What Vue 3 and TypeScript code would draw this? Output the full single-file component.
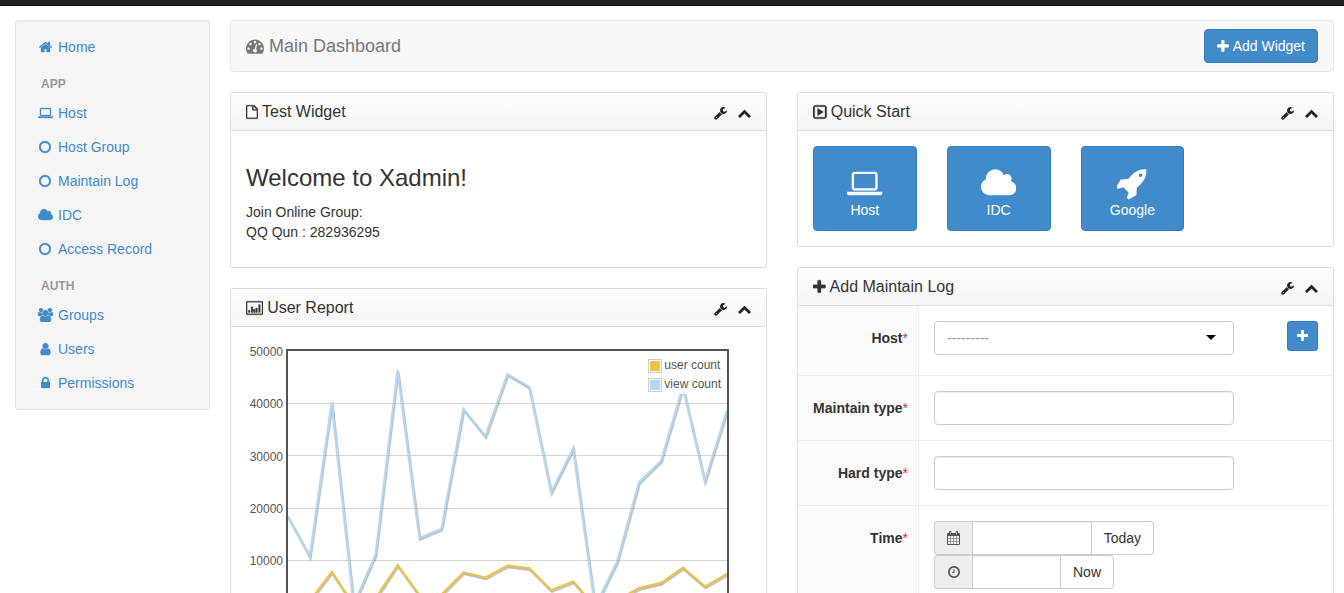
<script setup lang="ts">
import { ref } from 'vue'

interface Icon { box: string; d: string }

const icons: Record<string, Icon> = {
  home: { box: '64 0 1664 1792', d: 'M1472 992v480q0 26-19 45t-45 19h-384v-384h-256v384h-384q-26 0-45-19t-19-45v-480q0-1 .5-3t.5-3l575-474 575 474q1 2 1 6zm223-69l-62 74q-8 9-21 11h-3q-13 0-21-7l-692-577-692 577q-12 8-24 7-13-2-21-11l-62-74q-8-10-7-23.5t11-21.5l719-599q32-26 76-26t76 26l244 204v-195q0-14 9-23t23-9h192q14 0 23 9t9 23v408l219 182q10 8 11 21.5t-7 23.5z' },
  laptop: { box: '0 0 1920 1792', d: 'M416 1280q-66 0-113-47t-47-113v-704q0-66 47-113t113-47h1088q66 0 113 47t47 113v704q0 66-47 113t-113 47zM384 416v704q0 13 9.500 22.500t22.500 9.500h1088q13 0 22.500-9.500t9.500-22.500v-704q0-13-9.500-22.500t-22.500-9.500h-1088q-13 0-22.500 9.500t-9.500 22.500zM1760 1344h160v96q0 40-47 68t-113 28h-1600q-66 0-113-28t-47-68v-96h160z' },
  circle: { box: '128 0 1536 1792', d: 'M896 352q-148 0-273 73t-198 198-73 273 73 273 198 198 273 73 273-73 198-198 73-273-73-273-198-198-273-73zm768 544q0 209-103 385.5t-279.5 279.5-385.5 103-385.5-103-279.5-279.5-103-385.5 103-385.5 279.5-279.5 385.5-103 385.5 103 279.5 279.5 103 385.5z' },
  cloud: { box: '64 0 1920 1792', d: 'M1984 1152q0 159-112.5 271.5t-271.5 112.5h-1088q-185 0-316.5-131.5t-131.5-316.5q0-132 71-241.5t187-163.5q-2-28-2-43 0-212 150-362t362-150q158 0 286.5 88t187.5 230q70-62 166-62 106 0 181 75t75 181q0 75-41 138 129 30 213 134.5t84 239.5z' },
  users: { box: '64 0 1920 1792', d: 'M657 896q-162 5-265 128h-134q-82 0-138-40.5t-56-118.5q0-353 124-353 6 0 43.5 21t97.5 42.5 119 21.5q67 0 133-23-5 37-5 66 0 159 93 256zm1071 637q0 120-73 189.5t-194 69.5h-874q-121 0-194-69.5t-73-189.5q0-53 3.5-103.5t14-109 26.5-108.5 43-97.5 62-81 85.500-53.5 111.5-20q10 0 43 21.5t73 48 107 48 135 21.5 135-21.5 107-48 73-48 43-21.5q61 0 111.5 20t85.5 53.5 62 81 43 97.5 26.5 108.5 14 109 3.5 103.5zm-1024-1277q0 106-75 181t-181 75-181-75-75-181 75-181 181-75 181 75 75 181zm704 384q0 159-112.5 271.5t-271.5 112.5-271.5-112.5-112.5-271.5 112.5-271.5 271.5-112.5 271.5 112.5 112.5 271.5zm576 225q0 78-56 118.5t-138 40.5h-134q-103-123-265-128 93-97 93-256 0-29-5-66 66 23 133 23 59 0 119-21.5t97.5-42.5 43.5-21q124 0 124 353zm-128-609q0 106-75 181t-181 75-181-75-75-181 75-181 181-75 181 75 75 181z' },
  user: { box: '192 0 1408 1792', d: 'M1536 1399q0 109-62.5 187t-150.5 78h-854q-88 0-150.5-78t-62.5-187q0-85 8.5-160.5t31.5-152 58.5-131 94-89 134.5-34.5q131 128 313 128t313-128q76 0 134.5 34.5t94 89 58.5 131 31.5 152 8.5 160.5zm-256-887q0 159-112.5 271.5t-271.5 112.5-271.5-112.5-112.5-271.5 112.5-271.5 271.5-112.5 271.5 112.5 112.5 271.5z' },
  lock: { box: '320 0 1152 1792', d: 'M640 768h512v-192q0-106-75-181t-181-75-181 75-75 181v192zm832 96v576q0 40-28 68t-68 28h-960q-40 0-68-28t-28-68v-576q0-40 28-68t68-28h32v-192q0-184 132-316t316-132 316 132 132 316v192h32q40 0 68 28t28 68z' },
  dashboard: { box: '0 0 1792 1792', d: 'M384 1152q0-53-37.5-90.5t-90.5-37.5-90.5 37.5-37.5 90.5 37.5 90.5 90.5 37.5 90.5-37.5 37.5-90.5zm192-448q0-53-37.5-90.5t-90.5-37.5-90.5 37.5-37.5 90.5 37.5 90.5 90.5 37.5 90.5-37.5 37.5-90.5zm428 481l101-382q6-26-7.5-48.5t-38.5-29.5-48 6.5-30 39.5l-101 382q-60 5-107 43.5t-63 98.5q-20 77 20 146t117 89 146-20 89-117q16-60-6-117t-72-91zm660-33q0-53-37.5-90.5t-90.5-37.5-90.5 37.5-37.5 90.5 37.5 90.5 90.5 37.5 90.5-37.5 37.5-90.5zm-640-640q0-53-37.5-90.5t-90.5-37.5-90.5 37.5-37.5 90.5 37.5 90.5 90.5 37.5 90.5-37.5 37.5-90.5zm448 192q0-53-37.5-90.5t-90.5-37.5-90.5 37.5-37.5 90.5 37.5 90.5 90.5 37.5 90.5-37.5 37.5-90.5zm320 448q0 261-141 483-19 29-54 29h-1402q-35 0-54-29-141-221-141-483 0-182 71-348t191-286 286-191 348-71 348 71 286 191 191 286 71 348z' },
  plus: { box: '192 0 1408 1792', d: 'M1600 736v192q0 40-28 68t-68 28h-416v416q0 40-28 68t-68 28h-192q-40 0-68-28t-28-68v-416h-416q-40 0-68-28t-28-68v-192q0-40 28-68t68-28h416v-416q0-40 28-68t68-28h192q40 0 68 28t28 68v416h416q40 0 68 28t28 68z' },
  wrench: { box: '64 0 1664 1792', d: 'M448 1472q0-26-19-45t-45-19-45 19-19 45 19 45 45 19 45-19 19-45zm644-420l-682 682q-37 37-90 37-52 0-91-37l-106-108q-38-36-38-90 0-53 38-91l681-681q39 98 114.5 173.5t173.5 114.5zm634-435q0 39-23 106-47 134-164.5 217.5t-258.5 83.5q-185 0-316.5-131.5t-131.5-316.5 131.5-316.5 316.5-131.5q58 0 121.5 16.5t107.5 46.5q16 11 16 28t-16 28l-293 169v224l193 107q5-3 79-48.5t135.5-81 70.5-35.5q15 0 23.5 10t8.5 25z' },
  up: { box: '64 0 1664 1792', d: 'M1683 1331l-166 165q-19 19-45 19t-45-19l-531-531-531 531q-19 19-45 19t-45-19l-166-165q-19-19-19-45.5t19-45.5l742-741q19-19 45-19t45 19l742 741q19 19 19 45.5t-19 45.5z' },
  file: { box: '0 0 1344 1792', d: 'M96 128h752q40 0 88 20t76 48l256 256q28 28 48 76t20 88v952q0 40-28 68t-68 28H96q-40 0-68-28t-28-68V224q0-40 28-68t68-28zM128 256v1280h1088V736H800q-40 0-68-28t-28-68V256zM832 260v348h348q-8-24-20-36L868 280q-12-12-36-20z' },
  play: { box: '0 0 1536 1792', d: 'M288 128h960q119 0 203.500 84.500T1536 416v960q0 119-84.500 203.500T1248 1664H288q-119 0-203.500-84.500T0 1376V416q0-119 84.500-203.500T288 128zM256 320q-26 0-45 19t-19 45v1024q0 26 19 45t45 19h1024q26 0 45-19t19-45V384q0-26-19-45t-45-19zM512 528q0-50 50-28l576 356q36 40 0 80l-576 356q-50 22-50-28z' },
  chart: { box: '0 0 1920 1792', d: 'M128 128h1664q128 0 128 128v1280q0 128-128 128H128Q0 1664 0 1536V256Q0 128 128 128zM128 256v1280h1664V256zM256 1152h192v256H256zM576 768h192v640H576zM832 1024h192v384H832zM1088 896h192v512h-192zM1408 512h192v896h-192z' },
  rocket: { box: '64 0 1664 1792', d: 'M1440 448q0-40-28-68t-68-28-68 28-28 68 28 68 68 28 68-28 28-68zm224-288q0 249-75.5 430.5t-253.5 360.5q-81 80-195 176l-20 379q-2 16-16 26l-384 224q-7 4-16 4-12 0-23-9l-64-64q-13-14-8-32l85-276-281-281-276 85q-3 1-9 1-14 0-23-9l-64-64q-17-19-5-39l224-384q10-14 26-16l379-20q96-114 176-195 188-187 358-258t431-71q14 0 24 9.500t10 22.500z' },
  calendar: { box: '0 0 1664 1792', d: 'M128 256h128v-96q0-160 160-160t160 160v96h512v-96q0-160 160-160t160 160v96h128q128 0 128 128v1280q0 128-128 128H128Q0 1792 0 1664V384Q0 256 128 256zM128 640v288h288V640zM480 640v288h320V640zM864 640v288h320V640zM1248 640v288h288V640zM128 992v320h288V992zM480 992v320h320V992zM864 992v320h320V992zM1248 992v320h288V992zM128 1376v288h288v-288zM480 1376v288h320v-288zM864 1376v288h320v-288zM1248 1376v288h288v-288zM384 128v320h64V128zM1216 128v320h64V128z' },
  clock: { box: '128 0 1536 1792', d: 'M896 352q-148 0-273 73t-198 198-73 273 73 273 198 198 273 73 273-73 198-198 73-273-73-273-198-198-273-73zm768 544q0 209-103 385.5t-279.5 279.5-385.5 103-385.5-103-279.5-279.5-103-385.5 103-385.5 279.5-279.5 385.5-103 385.5 103 279.5 279.5 103 385.5zM832 544h128v416q0 32-32 32H640V864h192z' },
}

const nav = [
  { title: '', items: [{ icon: 'home', label: 'Home' }] },
  { title: 'APP', items: [
    { icon: 'laptop', label: 'Host' },
    { icon: 'circle', label: 'Host Group' },
    { icon: 'circle', label: 'Maintain Log' },
    { icon: 'cloud', label: 'IDC' },
    { icon: 'circle', label: 'Access Record' },
  ] },
  { title: 'AUTH', items: [
    { icon: 'users', label: 'Groups' },
    { icon: 'user', label: 'Users' },
    { icon: 'lock', label: 'Permissions' },
  ] },
]

const shortcuts = [
  { icon: 'laptop', label: 'Host' },
  { icon: 'cloud', label: 'IDC' },
  { icon: 'rocket', label: 'Google' },
]

const ticks = [50000, 40000, 30000, 20000, 10000]
const plotHeight = 261
const top = 50000

const users = [1100, 2200, 7700, 1300, 2700, 9000, 3200, 3400, 7600, 6600, 8900, 8400, 4200, 5900, 900, 2300, 4600, 5600, 8500, 4900, 7300]
const views = [18400, 10700, 40200, 1500, 11100, 46300, 14200, 16000, 38900, 33700, 45600, 43100, 23000, 31400, 1100, 9700, 24900, 29000, 43200, 25100, 38600]

const y = (v: number) => plotHeight * (1 - v / top)
const points = (values: number[]) => values.map((v, i) => `${i * 22},${y(v).toFixed(1)}`).join(' ')

const series = [
  { label: 'user count', kind: 'user', points: points(users) },
  { label: 'view count', kind: 'view', points: points(views) },
]

const host = ref('')
const maintainType = ref('')
const hardType = ref('')
const date = ref('')
const time = ref('')

function setToday() {
  date.value = new Date().toISOString().slice(0, 10)
}
function setNow() {
  time.value = new Date().toTimeString().slice(0, 8)
}
</script>

<template>
  <div class="page">
    <div class="topbar"></div>
    <div class="layout">
      <nav class="sidebar">
        <div v-for="group in nav" :key="group.title">
          <h2 v-if="group.title" class="nav-title">{{ group.title }}</h2>
          <a v-for="item in group.items" :key="item.label" href="#" class="nav-link">
            <span class="nav-icon"><svg class="icon" :viewBox="icons[item.icon].box" aria-hidden="true"><path :d="icons[item.icon].d" fill-rule="evenodd" /></svg></span>
            {{ item.label }}
          </a>
        </div>
      </nav>

      <main class="main">
        <header class="header">
          <h1 class="page-title">
            <svg class="icon" :viewBox="icons.dashboard.box" aria-hidden="true"><path :d="icons.dashboard.d" fill-rule="evenodd" /></svg>
            Main Dashboard
          </h1>
          <button type="button" class="btn-primary add-widget">
            <svg class="icon" :viewBox="icons.plus.box" aria-hidden="true"><path :d="icons.plus.d" /></svg>
            Add Widget
          </button>
        </header>

        <div class="columns">
          <div class="column">
            <section class="panel">
              <div class="panel-head">
                <h2 class="panel-title"><svg class="icon" :viewBox="icons.file.box" aria-hidden="true"><path :d="icons.file.d" fill-rule="evenodd" /></svg>Test Widget</h2>
                <button type="button" class="tool" aria-label="Settings"><svg class="icon" :viewBox="icons.wrench.box"><path :d="icons.wrench.d" /></svg></button>
                <button type="button" class="tool" aria-label="Collapse"><svg class="icon" :viewBox="icons.up.box"><path :d="icons.up.d" /></svg></button>
              </div>
              <div class="panel-body">
                <h3 class="welcome">Welcome to Xadmin!</h3>
                <p class="text">Join Online Group:<br />QQ Qun : 282936295</p>
              </div>
            </section>

            <section class="panel">
              <div class="panel-head">
                <h2 class="panel-title"><svg class="icon" :viewBox="icons.chart.box" aria-hidden="true"><path :d="icons.chart.d" fill-rule="evenodd" /></svg>User Report</h2>
                <button type="button" class="tool" aria-label="Settings"><svg class="icon" :viewBox="icons.wrench.box"><path :d="icons.wrench.d" /></svg></button>
                <button type="button" class="tool" aria-label="Collapse"><svg class="icon" :viewBox="icons.up.box"><path :d="icons.up.d" /></svg></button>
              </div>
              <div class="chart">
                <div class="ticks">
                  <span v-for="t in ticks" :key="t">{{ t }}</span>
                </div>
                <div class="plot">
                  <svg class="lines" viewBox="0 0 440 261" preserveAspectRatio="none" role="img" aria-label="User count and view count">
                    <line v-for="t in ticks.slice(1)" :key="t" class="grid" x1="0" x2="440" :y1="Math.round(y(t)) + 0.5" :y2="Math.round(y(t)) + 0.5" />
                    <g v-for="s in series" :key="s.kind">
                      <polyline class="shade wide" :points="s.points" transform="translate(1 2)" />
                      <polyline class="shade" :points="s.points" transform="translate(0 1)" />
                      <polyline class="line" :class="s.kind" :points="s.points" />
                    </g>
                  </svg>
                  <ul class="legend">
                    <li v-for="s in series" :key="s.kind"><span class="swatch"><span :class="s.kind"></span></span>{{ s.label }}</li>
                  </ul>
                </div>
              </div>
            </section>
          </div>

          <div class="column">
            <section class="panel">
              <div class="panel-head">
                <h2 class="panel-title"><svg class="icon" :viewBox="icons.play.box" aria-hidden="true"><path :d="icons.play.d" fill-rule="evenodd" /></svg>Quick Start</h2>
                <button type="button" class="tool" aria-label="Settings"><svg class="icon" :viewBox="icons.wrench.box"><path :d="icons.wrench.d" /></svg></button>
                <button type="button" class="tool" aria-label="Collapse"><svg class="icon" :viewBox="icons.up.box"><path :d="icons.up.d" /></svg></button>
              </div>
              <div class="panel-body shortcuts">
                <a v-for="s in shortcuts" :key="s.label" href="#" class="btn-primary shortcut">
                  <svg class="icon" :viewBox="icons[s.icon].box" aria-hidden="true"><path :d="icons[s.icon].d" fill-rule="evenodd" /></svg>
                  {{ s.label }}
                </a>
              </div>
            </section>

            <section class="panel">
              <div class="panel-head">
                <h2 class="panel-title"><svg class="icon" :viewBox="icons.plus.box" aria-hidden="true"><path :d="icons.plus.d" /></svg>Add Maintain Log</h2>
                <button type="button" class="tool" aria-label="Settings"><svg class="icon" :viewBox="icons.wrench.box"><path :d="icons.wrench.d" /></svg></button>
                <button type="button" class="tool" aria-label="Collapse"><svg class="icon" :viewBox="icons.up.box"><path :d="icons.up.d" /></svg></button>
              </div>
              <form @submit.prevent>
                <div class="row">
                  <label class="label" for="host">Host<span class="req">*</span></label>
                  <div class="field related">
                    <div class="select">
                      <select id="host" v-model="host" class="control">
                        <option value="">---------</option>
                      </select>
                      <svg class="caret" viewBox="0 0 10 5" aria-hidden="true"><path d="M0 0h10L5 5z" /></svg>
                    </div>
                    <button type="button" class="btn-primary add-related" aria-label="Add host"><svg class="icon" :viewBox="icons.plus.box"><path :d="icons.plus.d" /></svg></button>
                  </div>
                </div>
                <div class="row">
                  <label class="label" for="maintain-type">Maintain type<span class="req">*</span></label>
                  <div class="field"><input id="maintain-type" v-model="maintainType" type="text" class="control" /></div>
                </div>
                <div class="row">
                  <label class="label" for="hard-type">Hard type<span class="req">*</span></label>
                  <div class="field"><input id="hard-type" v-model="hardType" type="text" class="control" /></div>
                </div>
                <div class="row">
                  <label class="label" for="date">Time<span class="req">*</span></label>
                  <div class="field">
                    <div class="group date">
                      <span class="addon"><svg class="icon" :viewBox="icons.calendar.box" aria-hidden="true"><path :d="icons.calendar.d" fill-rule="evenodd" /></svg></span>
                      <input id="date" v-model="date" type="text" class="control" />
                      <button type="button" class="btn-default" @click="setToday">Today</button>
                    </div>
                    <div class="group time">
                      <span class="addon"><svg class="icon" :viewBox="icons.clock.box" aria-hidden="true"><path :d="icons.clock.d" fill-rule="evenodd" /></svg></span>
                      <input v-model="time" type="text" class="control" aria-label="Time of day" />
                      <button type="button" class="btn-default" @click="setNow">Now</button>
                    </div>
                  </div>
                </div>
              </form>
            </section>
          </div>
        </div>
      </main>
    </div>
  </div>
</template>

<style>
html, body { margin: 0; background: #fff; }
</style>

<style scoped>
.page, .page * { box-sizing: border-box; }
.page {
  height: 100vh;
  overflow: hidden;
  font: 14px/20px "Liberation Sans", Arial, sans-serif;
  color: #333;
}
h1, h2, h3, p, ul { margin: 0; padding: 0; font-weight: 400; }
a { text-decoration: none; }
button, input, select { font: inherit; margin: 0; }
button { cursor: pointer; }
.icon { height: 14px; width: auto; fill: currentColor; flex: none; display: block; }

.topbar { height: 6px; background: #222; border-bottom: 1px solid #080808; }
.layout {
  display: grid;
  grid-template-columns: 195px minmax(0, 1fr);
  gap: 20px;
  align-items: start;
  padding: 14px 10px 0 15px;
}

.sidebar {
  padding: 9px;
  background: #f5f5f5;
  border: 1px solid #e3e3e3;
  border-radius: 3px;
  box-shadow: inset 0 1px 1px rgba(0, 0, 0, .05);
}
.nav-title {
  padding: 10px 16px 2px;
  font-size: 12px;
  font-weight: 700;
  color: #999;
}
.nav-link {
  display: flex;
  align-items: center;
  gap: 5px;
  height: 34px;
  padding: 0 12px;
  color: #428bca;
}
.nav-icon { display: flex; justify-content: center; width: 16px; }
.nav-icon path { stroke: currentColor; stroke-width: 40; }

.header {
  display: flex;
  align-items: center;
  justify-content: space-between;
  height: 52px;
  padding: 0 15px;
  margin-bottom: 20px;
  background: #f8f8f8;
  border: 1px solid #e7e7e7;
  border-radius: 4px;
}
.page-title { display: flex; align-items: center; gap: 5px; font-size: 18px; color: #777; }
.page-title .icon { height: 18px; }

.btn-primary {
  display: flex;
  align-items: center;
  justify-content: center;
  background: #428bca;
  border: 1px solid #357ebd;
  border-radius: 4px;
  color: #fff;
}
.add-widget { height: 34px; gap: 4px; padding: 0 12px; }
.add-widget .icon { height: 15px; }

.columns { display: grid; grid-template-columns: repeat(2, minmax(0, 1fr)); gap: 30px; align-items: start; }
.column { display: grid; gap: 20px; }

.panel {
  background: #fff;
  border: 1px solid #ddd;
  border-radius: 2px;
}
.panel-head {
  display: flex;
  align-items: center;
  gap: 11px;
  height: 38px;
  padding: 0 15px;
  background: linear-gradient(#fdfdfd, #f5f5f5);
  border-bottom: 1px solid #ddd;
}
.panel-title { display: flex; flex: 1; align-items: center; gap: 4px; font-size: 16px; }
.panel-title .icon { height: 16px; }
.panel-title path { stroke: currentColor; stroke-width: 30; }
.tool { padding: 2px 0 0; background: none; border: 0; color: #222; }
.panel-body { padding: 15px; }
.welcome { margin: 20px 0 12px; font-size: 24px; line-height: 24px; }
.text { margin-bottom: 10px; }

.shortcuts { display: grid; grid-template-columns: repeat(4, 1fr); gap: 30px; }
.shortcut { flex-direction: column; height: 85px; padding-top: 9px; }
.shortcut .icon { height: 33px; }

.chart { display: flex; gap: 3px; padding: 22px 37px 40px 15px; }
.ticks {
  display: flex;
  flex-direction: column;
  justify-content: space-between;
  width: 37px;
  height: 225px;
  margin-top: -5px;
  font-size: 12px;
  line-height: 16px;
  text-align: right;
  color: #545454;
}
.plot { position: relative; flex: 1; height: 265px; border: 2px solid #545454; }
.lines { display: block; width: 100%; height: 261px; }
.lines line, .lines polyline { fill: none; vector-effect: non-scaling-stroke; }
.grid { stroke: #d4d4d4; stroke-width: 1; }
.shade { stroke: rgba(0, 0, 0, .15); stroke-width: 3; }
.shade.wide { stroke-width: 2; }
.line { stroke-width: 2; }
.line.user { stroke: #edc240; }
.line.view { stroke: #afd8f8; }
.legend {
  position: absolute;
  top: 5px;
  right: 5px;
  padding-right: 1px;
  background: rgba(255, 255, 255, .85);
  list-style: none;
  font-size: 12px;
  line-height: 19px;
  color: #545454;
}
.legend li { display: flex; align-items: center; gap: 2px; }
.swatch { padding: 1px; border: 1px solid #ccc; }
.swatch span { display: block; width: 10px; height: 10px; }
.swatch .user { background: #edc240; }
.swatch .view { background: #afd8f8; }

.row { display: grid; grid-template-columns: 121px minmax(0, 1fr); border-bottom: 1px solid #eee; }
.label {
  padding: 22px 10px 0 0;
  background: #fbfbfb;
  border-right: 1px solid #eee;
  font-weight: 700;
  text-align: right;
}
.req { font-weight: 400; color: #e0243c; }
.field { padding: 15px; }
.related { display: flex; justify-content: space-between; padding-bottom: 20px; }
.control {
  display: block;
  width: 100%;
  max-width: 300px;
  height: 34px;
  padding: 0 12px;
  background: #fff;
  border: 1px solid #ccc;
  border-radius: 4px;
  box-shadow: inset 0 1px 1px rgba(0, 0, 0, .075);
  color: #555;
}
.select { position: relative; flex: 0 1 300px; }
.select .control { appearance: none; box-shadow: none; color: #999; }
.caret { position: absolute; top: 14px; right: 18px; width: 10px; height: 5px; fill: #000; pointer-events: none; }
.add-related { width: 31px; height: 30px; padding: 0; border-radius: 3px; }
.add-related .icon { height: 14px; }

.group { display: flex; max-width: 100%; }
.date { width: 220px; }
.time { width: 180px; }
.addon {
  display: flex;
  flex: none;
  align-items: center;
  justify-content: center;
  width: 38px;
  background: #eee;
  border: 1px solid #ccc;
  border-right: 0;
  border-radius: 4px 0 0 4px;
  color: #555;
}
.group .control { flex: 1; min-width: 0; border-radius: 0; }
.btn-default {
  height: 34px;
  padding: 0 12px;
  background: #fff;
  border: 1px solid #ccc;
  border-left: 0;
  border-radius: 0 4px 4px 0;
  color: #333;
}
</style>
